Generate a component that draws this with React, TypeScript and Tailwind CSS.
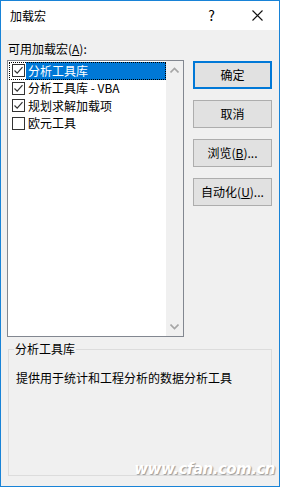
import React from 'react'

const FONT = { fontFamily: '"Noto Sans CJK SC", "Noto Sans", sans-serif' }

const items = [
    { label: '分析工具库', checked: true },
    { label: '分析工具库 - VBA', checked: true },
    { label: '规划求解加载项', checked: true },
    { label: '欧元工具', checked: false },
]

function Check({ checked }: { checked: boolean }) {
    return (
        <span className="w-[13px] h-[13px] border border-[#333] bg-white flex items-center justify-center shrink-0">
            {checked && (
                <svg width="11" height="11" viewBox="0 0 11 11">
                    <path d="M1.5 5.5 L4.2 8.2 L9.5 2.2" fill="none" stroke="#333" strokeWidth="1.2" />
                </svg>
            )}
        </span>
    )
}

function Chevron({ up }: { up?: boolean }) {
    return (
        <svg width="9" height="6" viewBox="0 0 9 6">
            <path d={up ? 'M0.5 5.5 L4.5 1.5 L8.5 5.5' : 'M0.5 0.5 L4.5 4.5 L8.5 0.5'} fill="none" stroke="#a6a6a6" strokeWidth="1.6" />
        </svg>
    )
}

function Btn({ children, primary }: { children: React.ReactNode; primary?: boolean }) {
    return (
        <button
            className={`w-[79px] h-[28px] bg-[#e1e1e1] text-[12px] text-black flex items-center justify-center ${primary ? 'border-2 border-[#0078d7]' : 'border border-[#adadad]'}`}
        >
            {children}
        </button>
    )
}

export default function App() {
    return (
        <div className="w-[281px] h-[489px] bg-white text-black" style={FONT}>
            <div className="relative w-[280px] h-[487px] border border-[#1883d7] bg-[#f0f0f0] flex flex-col">
                {/* title bar */}
                <div className="h-[29px] bg-white flex items-center shrink-0">
                    <span className="ml-[9px] text-[12px]">加载宏</span>
                    <span className="ml-auto mr-[37px] text-[14px]">?</span>
                    <svg className="mr-[16px]" width="11" height="11" viewBox="0 0 11 11">
                        <path d="M0.5 0.5 L10.5 10.5 M10.5 0.5 L0.5 10.5" stroke="#111" strokeWidth="1.1" />
                    </svg>
                </div>

                {/* body */}
                <div className="flex-1 flex flex-col px-[6px]">
                    <div className="mt-[12px] ml-[1px] text-[12px] leading-[14px]">
                        可用加载宏(<span className="underline">A</span>):
                    </div>
                    <div className="flex mt-[4px]">
                        <div className="w-[177px] h-[277px] border border-[#828790] bg-white flex">
                            <div className="flex-1 flex flex-col pt-[1px]">
                                {items.map((it, i) => (
                                    <div key={it.label} className={`h-[17.5px] flex items-center ml-[1px] ${i === 0 ? 'outline outline-1 outline-dotted outline-black -outline-offset-1' : ''}`}>
                                        <span className="ml-[3px]"><Check checked={it.checked} /></span>
                                        <span className={`ml-[1px] pl-[2px] pr-[2px] h-full flex items-center text-[12px] whitespace-pre ${i === 0 ? 'bg-[#0078d7] text-white flex-1' : ''}`}>
                                            {it.label}
                                        </span>
                                    </div>
                                ))}
                            </div>
                            <div className="w-[17px] bg-[#f0f0f0] flex flex-col items-center justify-between py-[6px]">
                                <Chevron up />
                                <Chevron />
                            </div>
                        </div>
                        <div className="ml-[9px] mt-[1px] flex flex-col gap-[11px]">
                            <Btn primary>确定</Btn>
                            <Btn>取消</Btn>
                            <Btn>浏览(<span className="underline">B</span>)...</Btn>
                            <Btn>自动化(<span className="underline">U</span>)...</Btn>
                        </div>
                    </div>

                    {/* group box */}
                    <div className="relative mt-[12px] ml-[1px] w-[264px] h-[127px] border border-[#dcdcdc]">
                        <span className="absolute -top-[9px] left-[5px] px-[1px] bg-[#f0f0f0] text-[12px] leading-[16px]">分析工具库</span>
                        <div className="mt-[20px] ml-[7px] text-[12px] leading-[16px]">提供用于统计和工程分析的数据分析工具</div>
                    </div>
                </div>

                <span
                    className="absolute right-[4px] bottom-[6px] text-[15px] italic font-bold text-white tracking-[-0.5px]"
                    style={{ fontFamily: '"DejaVu Sans", sans-serif', textShadow: '1px 1px 1px #9a9a9a' }}
                >
                    www.cfan.com.cn
                </span>
            </div>
        </div>
    )
}
